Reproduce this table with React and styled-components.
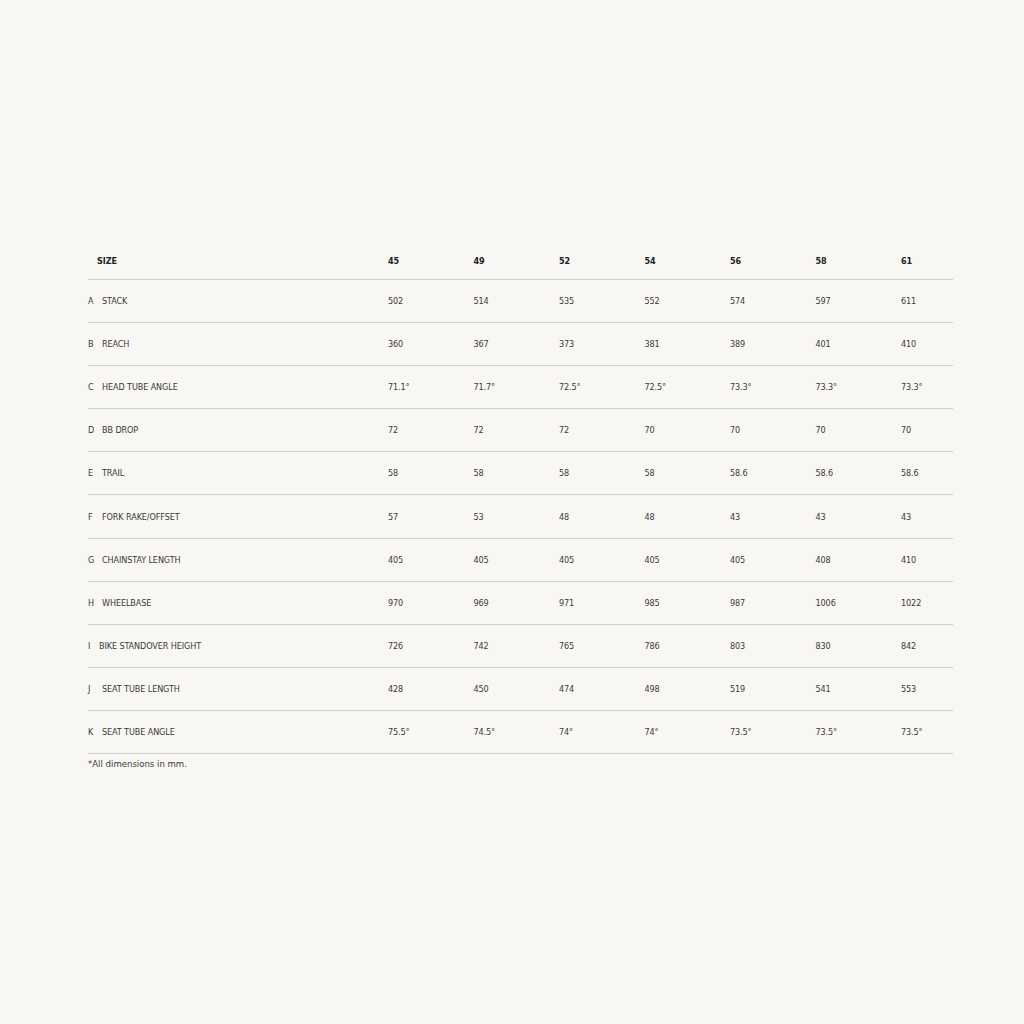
import React from "react";
import styled, { createGlobalStyle } from "styled-components";

const Global = createGlobalStyle`
  html, body { margin: 0; padding: 0; background: #f8f7f3; }
  body { font-family: "DejaVu Sans Condensed", "Liberation Sans Narrow", Roboto, sans-serif; color: #333; }
`;

const Page = styled.div`
  width: 1024px;
  height: 1024px;
  background: #f8f7f3;
  box-sizing: border-box;
  padding: 243px 71px 0 88px;
`;

const Table = styled.div`
  display: flex;
  flex-direction: column;
`;

const Row = styled.div`
  display: grid;
  grid-template-columns: 300px repeat(6, 85.5px) 1fr;
  align-items: center;
  height: ${(p) => (p.$head ? "37px" : "43.1px")};
  border-bottom: 1px solid #cfcfcd;
  box-sizing: border-box;
  font-size: 9px;
  letter-spacing: -0.1px;
  font-weight: ${(p) => (p.$head ? 700 : 400)};
  color: ${(p) => (p.$head ? "#222" : "#3a3a3a")};
`;

const NameCell = styled.div`
  display: flex;
  align-items: center;
  padding-left: ${(p) => (p.$head ? "9px" : "0")};
  text-transform: uppercase;
`;

const Letter = styled.span`
  display: inline-block;
  width: ${(p) => p.$w || "14px"};
`;

const Cell = styled.div``;

const Note = styled.div`
  margin-top: 4px;
  font-size: 9.5px;
  color: #3a3a3a;
`;

const sizes = ["45", "49", "52", "54", "56", "58", "61"];
const rows = [
  ["A", "Stack", ["502", "514", "535", "552", "574", "597", "611"]],
  ["B", "Reach", ["360", "367", "373", "381", "389", "401", "410"]],
  ["C", "Head Tube Angle", ["71.1°", "71.7°", "72.5°", "72.5°", "73.3°", "73.3°", "73.3°"]],
  ["D", "BB Drop", ["72", "72", "72", "70", "70", "70", "70"]],
  ["E", "Trail", ["58", "58", "58", "58", "58.6", "58.6", "58.6"]],
  ["F", "Fork Rake/Offset", ["57", "53", "48", "48", "43", "43", "43"]],
  ["G", "Chainstay Length", ["405", "405", "405", "405", "405", "408", "410"]],
  ["H", "Wheelbase", ["970", "969", "971", "985", "987", "1006", "1022"]],
  ["I", "Bike Standover Height", ["726", "742", "765", "786", "803", "830", "842"]],
  ["J", "Seat Tube Length", ["428", "450", "474", "498", "519", "541", "553"]],
  ["K", "Seat Tube Angle", ["75.5°", "74.5°", "74°", "74°", "73.5°", "73.5°", "73.5°"]],
];

export default function App() {
  return (
    <Page>
      <Global />
      <Table>
        <Row $head>
          <NameCell $head>Size</NameCell>
          {sizes.map((s) => (
            <Cell key={s}>{s}</Cell>
          ))}
        </Row>
        {rows.map(([l, n, vals]) => (
          <Row key={l}>
            <NameCell>
              <Letter $w={l === "I" ? "11px" : "14px"}>{l}</Letter>
              {n}
            </NameCell>
            {vals.map((v, i) => (
              <Cell key={i}>{v}</Cell>
            ))}
          </Row>
        ))}
      </Table>
      <Note>*All dimensions in mm.</Note>
    </Page>
  );
}
